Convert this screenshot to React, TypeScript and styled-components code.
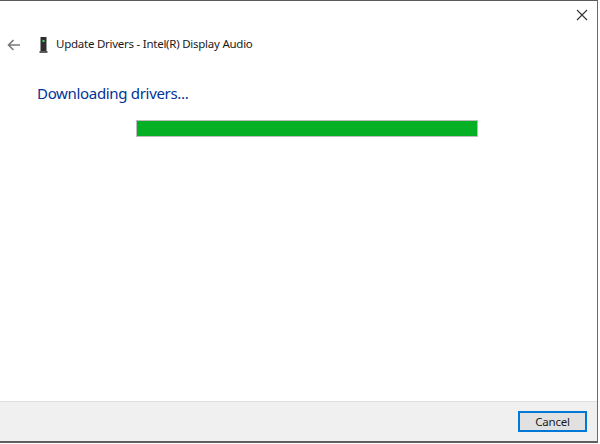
import React from 'react';
import styled, { createGlobalStyle } from 'styled-components';

const GlobalStyle = createGlobalStyle`
  html, body {
    margin: 0;
    padding: 0;
    background: #fff;
  }
`;

const Window = styled.div`
  width: 598px;
  height: 443px;
  box-sizing: border-box;
  display: flex;
  flex-direction: column;
  background: #fff;
  border-top: 1px solid #5a5a5a;
  border-right: 1px solid #6a6a6a;
  border-bottom: 2px solid #5f5f5f;
  font-family: 'Noto Sans', 'Open Sans', sans-serif;
`;

const TitleBar = styled.div`
  height: 29px;
  display: flex;
  justify-content: flex-end;
  align-items: flex-start;
  padding: 8px 9px 0 0;
  box-sizing: border-box;
`;

const CloseButton = styled.button`
  width: 12px;
  height: 12px;
  padding: 0;
  border: none;
  background: none;
  display: block;
`;

const Header = styled.div`
  display: flex;
  align-items: center;
  height: 29px;
  padding-left: 7px;
`;

const BackButton = styled.button`
  width: 14px;
  height: 12px;
  padding: 0 0 1px;
  border: none;
  background: none;
  display: block;
  margin-right: 18px;
`;

const DeviceIcon = styled.svg`
  width: 9px;
  height: 16px;
  margin-right: 8px;
`;

const Title = styled.span`
  font-size: 11.5px;
  letter-spacing: -0.25px;
  padding-bottom: 2px;
  color: #1a1a1a;
  white-space: nowrap;
`;

const Content = styled.div`
  flex: 1;
  padding: 22px 0 0 37px;
`;

const Heading = styled.h1`
  margin: 0;
  font-size: 15px;
  letter-spacing: -0.32px;
  line-height: 24px;
  font-weight: 400;
  color: #003399;
  white-space: nowrap;
`;

const ProgressTrack = styled.div`
  width: 342px;
  height: 17px;
  margin: 15px 0 0 99px;
  box-sizing: border-box;
  border: 1px solid #bcbcbc;
  background: #e6e6e6;
`;

const ProgressFill = styled.div`
  height: 100%;
  background: #06b025;
`;

const Footer = styled.div`
  height: 40px;
  box-sizing: border-box;
  display: flex;
  justify-content: flex-end;
  align-items: flex-start;
  padding: 9px 10px 0 0;
  background: #f0f0f0;
  border-top: 1px solid #dfdfdf;
`;

const CancelButton = styled.button`
  width: 69px;
  height: 21px;
  padding: 0 0 1px;
  box-sizing: border-box;
  border: 2px solid #0078d7;
  background: #e1e1e1;
  font-family: inherit;
  font-size: 11.5px;
  letter-spacing: -0.25px;
  line-height: 15px;
  color: #1a1a1a;
`;

const App = () => {
  return (
    <>
      <GlobalStyle />
      <Window>
        <TitleBar>
          <CloseButton aria-label="Close">
            <svg width="12" height="12" viewBox="0 0 12 12" fill="none" stroke="#333" strokeWidth="1.1">
              <path d="M1 1 L11 11 M11 1 L1 11" />
            </svg>
          </CloseButton>
        </TitleBar>
        <Header>
          <BackButton aria-label="Back">
            <svg width="14" height="12" viewBox="0 0 14 12" fill="none" stroke="#7a7a7a" strokeWidth="1.6">
              <path d="M13 6 H1.5 M6.5 1 L1.5 6 L6.5 11" />
            </svg>
          </BackButton>
          <DeviceIcon viewBox="0 0 9 16">
            <rect x="1.5" y="0" width="6" height="14" fill="#2e2e2e" />
            <rect x="0.5" y="14" width="8" height="2" fill="#5c5c5c" />
            <rect x="3.5" y="3" width="2" height="2" fill="#3fdc5a" />
          </DeviceIcon>
          <Title>Update Drivers - Intel(R) Display Audio</Title>
        </Header>
        <Content>
          <Heading>Downloading drivers...</Heading>
          <ProgressTrack>
            <ProgressFill style={{ width: '100%' }} />
          </ProgressTrack>
        </Content>
        <Footer>
          <CancelButton>Cancel</CancelButton>
        </Footer>
      </Window>
    </>
  );
};

export default App;
